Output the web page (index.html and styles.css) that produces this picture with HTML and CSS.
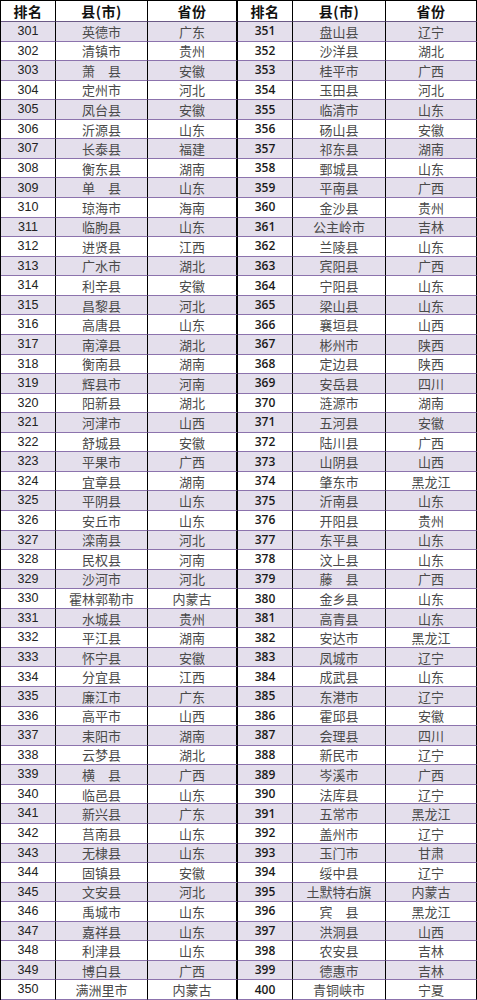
FILE: index.html
```html
<!DOCTYPE html>
<html lang="zh">
<head>
<meta charset="utf-8">
<title>排名</title>
<link rel="stylesheet" href="styles.css">
</head>
<body>
<div class="sheet">
  <div class="row head"><div class="c n">排名</div><div class="c">县(市)</div><div class="c mid">省份</div><div class="c n">排名</div><div class="c">县(市)</div><div class="c">省份</div></div>
  <div class="row alt"><div class="c num">301</div><div class="c">英德市</div><div class="c mid">广东</div><div class="c num b">351</div><div class="c">盘山县</div><div class="c">辽宁</div></div>
  <div class="row"><div class="c num">302</div><div class="c">清镇市</div><div class="c mid">贵州</div><div class="c num b">352</div><div class="c">沙洋县</div><div class="c">湖北</div></div>
  <div class="row alt"><div class="c num">303</div><div class="c">萧　县</div><div class="c mid">安徽</div><div class="c num b">353</div><div class="c">桂平市</div><div class="c">广西</div></div>
  <div class="row"><div class="c num">304</div><div class="c">定州市</div><div class="c mid">河北</div><div class="c num b">354</div><div class="c">玉田县</div><div class="c">河北</div></div>
  <div class="row alt"><div class="c num">305</div><div class="c">凤台县</div><div class="c mid">安徽</div><div class="c num b">355</div><div class="c">临清市</div><div class="c">山东</div></div>
  <div class="row"><div class="c num">306</div><div class="c">沂源县</div><div class="c mid">山东</div><div class="c num b">356</div><div class="c">砀山县</div><div class="c">安徽</div></div>
  <div class="row alt"><div class="c num">307</div><div class="c">长泰县</div><div class="c mid">福建</div><div class="c num b">357</div><div class="c">祁东县</div><div class="c">湖南</div></div>
  <div class="row"><div class="c num">308</div><div class="c">衡东县</div><div class="c mid">湖南</div><div class="c num b">358</div><div class="c">鄄城县</div><div class="c">山东</div></div>
  <div class="row alt"><div class="c num">309</div><div class="c">单　县</div><div class="c mid">山东</div><div class="c num b">359</div><div class="c">平南县</div><div class="c">广西</div></div>
  <div class="row"><div class="c num">310</div><div class="c">琼海市</div><div class="c mid">海南</div><div class="c num b">360</div><div class="c">金沙县</div><div class="c">贵州</div></div>
  <div class="row alt"><div class="c num">311</div><div class="c">临朐县</div><div class="c mid">山东</div><div class="c num b">361</div><div class="c">公主岭市</div><div class="c">吉林</div></div>
  <div class="row"><div class="c num">312</div><div class="c">进贤县</div><div class="c mid">江西</div><div class="c num b">362</div><div class="c">兰陵县</div><div class="c">山东</div></div>
  <div class="row alt"><div class="c num">313</div><div class="c">广水市</div><div class="c mid">湖北</div><div class="c num b">363</div><div class="c">宾阳县</div><div class="c">广西</div></div>
  <div class="row"><div class="c num">314</div><div class="c">利辛县</div><div class="c mid">安徽</div><div class="c num b">364</div><div class="c">宁阳县</div><div class="c">山东</div></div>
  <div class="row alt"><div class="c num">315</div><div class="c">昌黎县</div><div class="c mid">河北</div><div class="c num b">365</div><div class="c">梁山县</div><div class="c">山东</div></div>
  <div class="row"><div class="c num">316</div><div class="c">高唐县</div><div class="c mid">山东</div><div class="c num b">366</div><div class="c">襄垣县</div><div class="c">山西</div></div>
  <div class="row alt"><div class="c num">317</div><div class="c">南漳县</div><div class="c mid">湖北</div><div class="c num b">367</div><div class="c">彬州市</div><div class="c">陕西</div></div>
  <div class="row"><div class="c num">318</div><div class="c">衡南县</div><div class="c mid">湖南</div><div class="c num b">368</div><div class="c">定边县</div><div class="c">陕西</div></div>
  <div class="row alt"><div class="c num">319</div><div class="c">辉县市</div><div class="c mid">河南</div><div class="c num b">369</div><div class="c">安岳县</div><div class="c">四川</div></div>
  <div class="row"><div class="c num">320</div><div class="c">阳新县</div><div class="c mid">湖北</div><div class="c num b">370</div><div class="c">涟源市</div><div class="c">湖南</div></div>
  <div class="row alt"><div class="c num">321</div><div class="c">河津市</div><div class="c mid">山西</div><div class="c num b">371</div><div class="c">五河县</div><div class="c">安徽</div></div>
  <div class="row"><div class="c num">322</div><div class="c">舒城县</div><div class="c mid">安徽</div><div class="c num b">372</div><div class="c">陆川县</div><div class="c">广西</div></div>
  <div class="row alt"><div class="c num">323</div><div class="c">平果市</div><div class="c mid">广西</div><div class="c num b">373</div><div class="c">山阴县</div><div class="c">山西</div></div>
  <div class="row"><div class="c num">324</div><div class="c">宜章县</div><div class="c mid">湖南</div><div class="c num b">374</div><div class="c">肇东市</div><div class="c">黑龙江</div></div>
  <div class="row alt"><div class="c num">325</div><div class="c">平阴县</div><div class="c mid">山东</div><div class="c num b">375</div><div class="c">沂南县</div><div class="c">山东</div></div>
  <div class="row"><div class="c num">326</div><div class="c">安丘市</div><div class="c mid">山东</div><div class="c num b">376</div><div class="c">开阳县</div><div class="c">贵州</div></div>
  <div class="row alt"><div class="c num">327</div><div class="c">滦南县</div><div class="c mid">河北</div><div class="c num b">377</div><div class="c">东平县</div><div class="c">山东</div></div>
  <div class="row"><div class="c num">328</div><div class="c">民权县</div><div class="c mid">河南</div><div class="c num b">378</div><div class="c">汶上县</div><div class="c">山东</div></div>
  <div class="row alt"><div class="c num">329</div><div class="c">沙河市</div><div class="c mid">河北</div><div class="c num b">379</div><div class="c">藤　县</div><div class="c">广西</div></div>
  <div class="row"><div class="c num">330</div><div class="c">霍林郭勒市</div><div class="c mid">内蒙古</div><div class="c num b">380</div><div class="c">金乡县</div><div class="c">山东</div></div>
  <div class="row alt"><div class="c num">331</div><div class="c">水城县</div><div class="c mid">贵州</div><div class="c num b">381</div><div class="c">高青县</div><div class="c">山东</div></div>
  <div class="row"><div class="c num">332</div><div class="c">平江县</div><div class="c mid">湖南</div><div class="c num b">382</div><div class="c">安达市</div><div class="c">黑龙江</div></div>
  <div class="row alt"><div class="c num">333</div><div class="c">怀宁县</div><div class="c mid">安徽</div><div class="c num b">383</div><div class="c">凤城市</div><div class="c">辽宁</div></div>
  <div class="row"><div class="c num">334</div><div class="c">分宜县</div><div class="c mid">江西</div><div class="c num b">384</div><div class="c">成武县</div><div class="c">山东</div></div>
  <div class="row alt"><div class="c num">335</div><div class="c">廉江市</div><div class="c mid">广东</div><div class="c num b">385</div><div class="c">东港市</div><div class="c">辽宁</div></div>
  <div class="row"><div class="c num">336</div><div class="c">高平市</div><div class="c mid">山西</div><div class="c num b">386</div><div class="c">霍邱县</div><div class="c">安徽</div></div>
  <div class="row alt"><div class="c num">337</div><div class="c">耒阳市</div><div class="c mid">湖南</div><div class="c num b">387</div><div class="c">会理县</div><div class="c">四川</div></div>
  <div class="row"><div class="c num">338</div><div class="c">云梦县</div><div class="c mid">湖北</div><div class="c num b">388</div><div class="c">新民市</div><div class="c">辽宁</div></div>
  <div class="row alt"><div class="c num">339</div><div class="c">横　县</div><div class="c mid">广西</div><div class="c num b">389</div><div class="c">岑溪市</div><div class="c">广西</div></div>
  <div class="row"><div class="c num">340</div><div class="c">临邑县</div><div class="c mid">山东</div><div class="c num b">390</div><div class="c">法库县</div><div class="c">辽宁</div></div>
  <div class="row alt"><div class="c num">341</div><div class="c">新兴县</div><div class="c mid">广东</div><div class="c num b">391</div><div class="c">五常市</div><div class="c">黑龙江</div></div>
  <div class="row"><div class="c num">342</div><div class="c">莒南县</div><div class="c mid">山东</div><div class="c num b">392</div><div class="c">盖州市</div><div class="c">辽宁</div></div>
  <div class="row alt"><div class="c num">343</div><div class="c">无棣县</div><div class="c mid">山东</div><div class="c num b">393</div><div class="c">玉门市</div><div class="c">甘肃</div></div>
  <div class="row"><div class="c num">344</div><div class="c">固镇县</div><div class="c mid">安徽</div><div class="c num b">394</div><div class="c">绥中县</div><div class="c">辽宁</div></div>
  <div class="row alt"><div class="c num">345</div><div class="c">文安县</div><div class="c mid">河北</div><div class="c num b">395</div><div class="c">土默特右旗</div><div class="c">内蒙古</div></div>
  <div class="row"><div class="c num">346</div><div class="c">禹城市</div><div class="c mid">山东</div><div class="c num b">396</div><div class="c">宾　县</div><div class="c">黑龙江</div></div>
  <div class="row alt"><div class="c num">347</div><div class="c">嘉祥县</div><div class="c mid">山东</div><div class="c num b">397</div><div class="c">洪洞县</div><div class="c">山西</div></div>
  <div class="row"><div class="c num">348</div><div class="c">利津县</div><div class="c mid">山东</div><div class="c num b">398</div><div class="c">农安县</div><div class="c">吉林</div></div>
  <div class="row alt"><div class="c num">349</div><div class="c">博白县</div><div class="c mid">广西</div><div class="c num b">399</div><div class="c">德惠市</div><div class="c">吉林</div></div>
  <div class="row"><div class="c num">350</div><div class="c">满洲里市</div><div class="c mid">内蒙古</div><div class="c num b">400</div><div class="c">青铜峡市</div><div class="c">宁夏</div></div>
</div>
</body>
</html>
```
FILE: styles.css
```css
html, body {
  margin: 0;
  padding: 0;
  background: #ffffff;
}

.sheet {
  width: 477px;
  height: 1000px;
  box-sizing: border-box;
  border-left: 1px solid #000;
  border-top: 1px solid #000;
  display: grid;
  grid-template-columns: 55px 92px 90px 55px 93px 91px;
  grid-template-rows: 21px repeat(50, 1fr);
  font-family: "Noto Sans CJK SC", sans-serif;
  font-size: 13px;
  color: #4a4a4a;
}

.row {
  display: contents;
}

.c {
  box-sizing: border-box;
  border-right: 1px solid #000;
  border-bottom: 1px solid #8c73ad;
  display: flex;
  align-items: center;
  justify-content: center;
  line-height: 1;
  white-space: nowrap;
  overflow: hidden;
}

.c.mid {
  border-right-width: 2px;
}

.row.alt .c {
  background: #e4dfec;
}

.head .c {
  font-weight: 700;
  color: #111;
  font-size: 14px;
  letter-spacing: 0.5px;
  border-bottom-color: #6b5a86;
}

.num {
  font-family: "Liberation Sans", Arial, sans-serif;
  font-size: 12.5px;
  color: #222;
}

.num.b {
  font-family: "Open Sans", "Liberation Sans", sans-serif;
  font-weight: 600;
  font-size: 12px;
  color: #1a1a1a;
}
```
